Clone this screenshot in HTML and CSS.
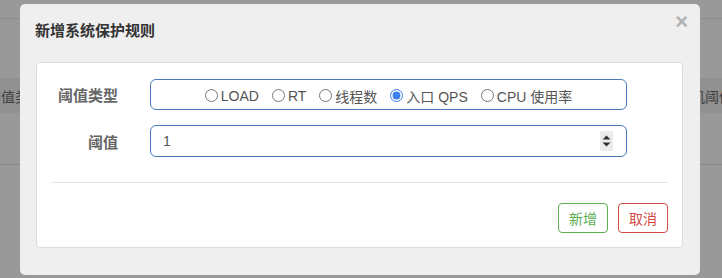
FILE: index.html
```html
<!DOCTYPE html>
<html>
<head>
    <title>新增系统保护规则</title>
    <link rel="stylesheet" href="styles.css">
</head>
<body>
    <div class="page">
        <div class="topbar"></div>
        <div class="thead">
            <span class="th th-first">阈值类型</span>
            <span class="th th-last">单机阈值</span>
        </div>
        <div class="row-line"></div>
    </div>

    <div class="modal">
        <div class="modal-header">
            <h4 class="modal-title">新增系统保护规则</h4>
            <span class="close">&times;</span>
        </div>
        <div class="modal-body">
            <div class="panel">
                <div class="form-row">
                    <label class="control-label">阈值类型</label>
                    <div class="radio-box">
                        <label class="radio"><input type="radio" name="mode">LOAD</label>
                        <label class="radio"><input type="radio" name="mode">RT</label>
                        <label class="radio"><input type="radio" name="mode">线程数</label>
                        <label class="radio"><input type="radio" name="mode" checked>入口 QPS</label>
                        <label class="radio"><input type="radio" name="mode">CPU 使用率</label>
                    </div>
                </div>
                <div class="form-row second">
                    <label class="control-label">阈值</label>
                    <div class="num-box">
                        <input class="num-input" type="text" value="1">
                        <span class="spinner">
                            <svg width="13" height="20" viewBox="0 0 13 20">
                                <path d="M2.5 8.5 L6.5 4.5 L10.5 8.5 Z" fill="#333"/>
                                <path d="M2.5 11.5 L6.5 15.5 L10.5 11.5 Z" fill="#333"/>
                            </svg>
                        </span>
                    </div>
                </div>
                <hr class="divider">
                <div class="actions">
                    <button class="btn btn-ok">新增</button>
                    <button class="btn btn-cancel">取消</button>
                </div>
            </div>
        </div>
    </div>
</body>
</html>
```

FILE: styles.css
```css
body {
    margin: 0;
    padding: 0;
    background-color: #999;
    font-family: "Liberation Sans", "Noto Sans CJK SC", sans-serif;
    overflow: hidden;
    height: 278px;
}
.page {
    width: 722px;
}
.topbar {
    height: 18px;
    border-bottom: 1px solid #8c8c8c;
}
.thead {
    margin-top: 59px;
    height: 35px;
    background-color: #919191;
    display: flex;
    justify-content: space-between;
    align-items: center;
    font-size: 14px;
    color: #3f3f3f;
    overflow: hidden;
}
.th-first {
    margin-left: -13px;
}
.th-last {
    margin-right: -11px;
}
.row-line {
    margin-top: 51px;
    height: 1px;
    background-color: #888;
}
.modal {
    position: absolute;
    left: 20px;
    top: 4px;
    width: 680px;
    height: 271px;
    background-color: #efefef;
    border-radius: 5px;
}
.modal-header {
    padding: 17px 15px 21px;
}
.modal-title {
    margin: 0;
    font-size: 15px;
    line-height: 20px;
    font-weight: bold;
    color: #333;
}
.close {
    position: absolute;
    top: 5px;
    right: 12px;
    font-size: 22px;
    font-weight: bold;
    color: #b3b3b3;
    font-family: "Liberation Sans", sans-serif;
}
.modal-body {
    padding: 0 17px 0 16px;
}
.panel {
    background-color: #fff;
    border: 1px solid #dcdcdc;
    border-radius: 4px;
    padding: 16px 14px 14px;
}
.form-row {
    display: flex;
    align-items: center;
}
.form-row.second {
    margin-top: 15px;
}
.control-label {
    width: 67px;
    margin-right: 32px;
    text-align: right;
    font-size: 15px;
    font-weight: bold;
    color: #666;
}
.radio-box {
    box-sizing: border-box;
    width: 477px;
    height: 31px;
    padding-top: 2px;
    border: 1px solid #4a78bd;
    border-radius: 6px;
    display: flex;
    justify-content: center;
    align-items: center;
    gap: 13px;
    font-size: 14px;
    color: #555;
}
.radio {
    display: flex;
    align-items: center;
}
.radio input {
    width: 13px;
    height: 13px;
    margin: 0 3px 0 0;
    accent-color: #3d7ff0;
}
.num-box {
    box-sizing: border-box;
    width: 477px;
    height: 32px;
    border: 1px solid #4a78bd;
    border-radius: 6px;
    display: flex;
    align-items: center;
}
.num-input {
    flex: 1;
    border: none;
    outline: none;
    padding: 0 0 0 12px;
    font-size: 14px;
    color: #555;
    font-family: "Liberation Sans", sans-serif;
    background: transparent;
}
.spinner {
    display: flex;
    width: 13px;
    height: 20px;
    margin-right: 13px;
    background-color: #ececec;
}
.divider {
    margin: 25px 0 20px;
    border: none;
    border-top: 1px solid #e5e5e5;
}
.actions {
    display: flex;
    justify-content: flex-end;
    gap: 10px;
}
.btn {
    width: 50px;
    height: 30px;
    padding: 0;
    background-color: #fff;
    border-radius: 4px;
    font-size: 14px;
    font-family: "Liberation Sans", "Noto Sans CJK SC", sans-serif;
    cursor: pointer;
}
.btn-ok {
    border: 1px solid #5cae4f;
    color: #5cae4f;
}
.btn-cancel {
    border: 1px solid #d24a46;
    color: #d24a46;
}
```
